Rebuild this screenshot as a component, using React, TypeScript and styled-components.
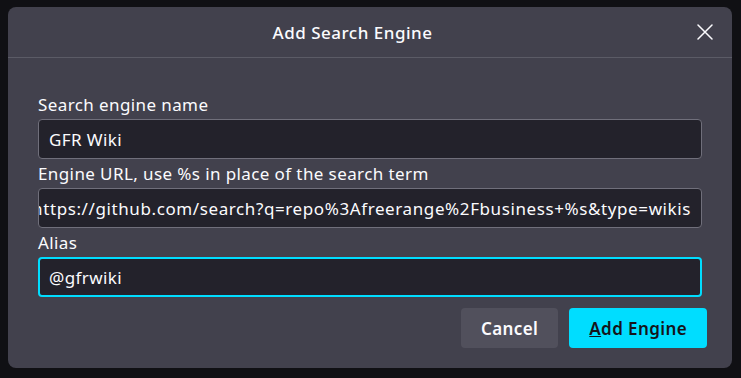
import React from "react";
import styled, { createGlobalStyle } from "styled-components";

const Global = createGlobalStyle`
  html, body { margin: 0; padding: 0; background: #101014; }
  body { width: 741px; height: 378px; overflow: hidden; font-family: "Noto Sans", "DejaVu Sans", sans-serif; }
  * { box-sizing: border-box; }
`;

const Page = styled.div`
  width: 741px;
  height: 378px;
  padding: 7px 9px 10px 8px;
  display: flex;
`;

const Dialog = styled.div`
  flex: 1;
  min-width: 0;
  background: #42414d;
  border-radius: 8px;
  display: flex;
  flex-direction: column;
  color: #fbfbfe;
`;

const Header = styled.div`
  height: 51px;
  border-bottom: 1px solid #5b5b66;
  display: flex;
  align-items: center;
`;

const Title = styled.div`
  flex: 1;
  text-align: center;
  padding-left: 8px;
  font-size: 17px;
  font-weight: 500;
  letter-spacing: 0.5px;
  color: #fbfbfe;
`;

const CloseButton = styled.button`
  width: 32px;
  height: 32px;
  margin-right: 11px;
  border: none;
  background: transparent;
  padding: 0;
  display: flex;
  align-items: center;
  justify-content: center;
  color: #fbfbfe;
`;

const Body = styled.div`
  min-width: 0;
  padding: 32px 30px 0 30px;
  display: flex;
  flex-direction: column;
`;

const Label = styled.div`
  height: 29px;
  display: flex;
  align-items: center;
  font-size: 17px;
  letter-spacing: 0.4px;
  color: #fbfbfe;
`;

const Field = styled.div<{ $focused?: boolean; $alignEnd?: boolean }>`
  min-width: 0;
  height: 40px;
  border-radius: 4px;
  background: #23222b;
  border: ${(p) => (p.$focused ? "2px solid #00ddff" : "1px solid #706f7b")};
  padding: 0 ${(p) => (p.$focused ? 9 : 10)}px;
  display: flex;
  align-items: center;
  justify-content: ${(p) => (p.$alignEnd ? "flex-end" : "flex-start")};
  overflow: hidden;
  white-space: nowrap;
  font-size: 17px;
  letter-spacing: ${(p) => (p.$alignEnd ? 0.6 : 0.4)}px;
  color: #fbfbfe;
`;

const FieldText = styled.span`
  flex-shrink: 0;
`;

const Footer = styled.div`
  display: flex;
  justify-content: flex-end;
  gap: 11px;
  padding: 9px 25px 20px 30px;
  margin-top: auto;
`;

const Button = styled.button<{ $primary?: boolean }>`
  height: 40px;
  padding: 0 20px;
  border: none;
  border-radius: 4px;
  font-family: inherit;
  font-size: 17px;
  font-weight: 600;
  letter-spacing: 0.4px;
  background: ${(p) => (p.$primary ? "#00ddff" : "#51505c")};
  color: ${(p) => (p.$primary ? "#15141a" : "#fbfbfe")};
`;

const AccessKey = styled.span`
  text-decoration: underline;
`;

export default function App() {
  return (
    <>
      <Global />
      <Page>
        <Dialog>
          <Header>
            <Title>Add Search Engine</Title>
            <CloseButton aria-label="Close">
              <svg width="16" height="16" viewBox="0 0 16 16">
                <path d="M1 1 L15 15 M15 1 L1 15" stroke="#fbfbfe" strokeWidth="1.5" strokeLinecap="round" />
              </svg>
            </CloseButton>
          </Header>
          <Body>
            <Label>Search engine name</Label>
            <Field>
              <FieldText>GFR Wiki</FieldText>
            </Field>
            <Label>Engine URL, use %s in place of the search term</Label>
            <Field $alignEnd>
              <FieldText>https://github.com/search?q=repo%3Afreerange%2Fbusiness+%s&amp;type=wikis</FieldText>
            </Field>
            <Label>Alias</Label>
            <Field $focused>
              <FieldText>@gfrwiki</FieldText>
            </Field>
          </Body>
          <Footer>
            <Button>Cancel</Button>
            <Button $primary>
              <AccessKey>A</AccessKey>dd Engine
            </Button>
          </Footer>
        </Dialog>
      </Page>
    </>
  );
}
